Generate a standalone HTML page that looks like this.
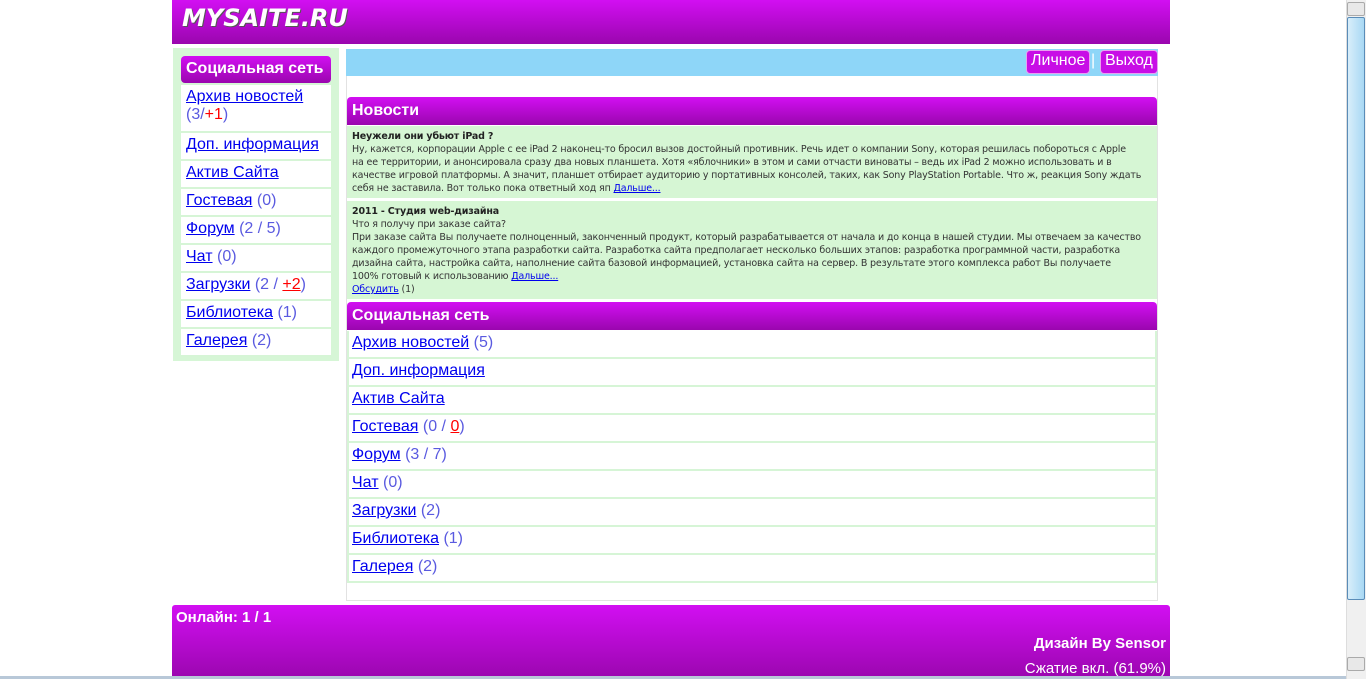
<!DOCTYPE html>
<html><head><meta charset="utf-8"><style>
*{margin:0;padding:0;box-sizing:border-box}
body{width:1366px;height:679px;overflow:hidden;background:#fff;font-family:"Liberation Sans",sans-serif;position:relative}
.abs{position:absolute}
.grad{background:linear-gradient(#d20ff2,#9a06ae)}
a{color:#0000ee;text-decoration:underline}
.cnt{color:#5a5ae0}
.red{color:#f00}
.hdr{color:#fff;font-weight:bold;font-size:16px;border-radius:4px 4px 0 0;padding-left:5px}
.item{background:#fff;border-bottom:2px solid #d6f5d6;height:28px;font-size:16px;padding:3px 0 0 5px;white-space:nowrap}
.news{background:#d6f6d4;font-size:9.5px;line-height:13px;color:#333;padding:4px 5px;white-space:nowrap;font-family:"DejaVu Sans",sans-serif;letter-spacing:-0.17px}
.news b{color:#222}
.btn{background:#c80de6;color:#fff;font-size:16px;border:1px solid #e8a0f0;border-radius:4px;height:24px;padding:1px 4px 0}
</style></head><body>
<div class="abs grad" style="left:172px;top:0;width:998px;height:44px"></div>
<div class="abs" style="left:182px;top:4px;font:bold italic 24px 'DejaVu Sans',sans-serif;color:#fff;letter-spacing:0;text-shadow:1px 1px 0 #555">MYSAITE.RU</div>

<div class="abs" style="left:173px;top:48px;width:166px;height:313px;background:#d6f6d6"></div>
<div class="abs" style="left:181px;top:56px;width:150px">
 <div class="grad hdr" style="height:27px;line-height:25px;border-radius:4px;">Социальная сеть</div>
 <div class="item" style="height:48px;margin-top:2px"><a>Архив новостей</a><br><span class="cnt">(3/<span class="red">+1</span>)</span></div>
 <div class="item"><a>Доп. информация</a></div>
 <div class="item"><a>Актив Сайта</a></div>
 <div class="item"><a>Гостевая</a> <span class="cnt">(0)</span></div>
 <div class="item"><a>Форум</a> <span class="cnt">(2 / 5)</span></div>
 <div class="item"><a>Чат</a> <span class="cnt">(0)</span></div>
 <div class="item"><a>Загрузки</a> <span class="cnt">(2 / <a class="red" style="color:#f00">+2</a>)</span></div>
 <div class="item"><a>Библиотека</a> <span class="cnt">(1)</span></div>
 <div class="item"><a>Галерея</a> <span class="cnt">(2)</span></div>
</div>

<div class="abs" style="left:346px;top:49px;width:812px;height:552px;border:1px solid #e2e2e2;background:#fff"></div>
<div class="abs" style="left:346px;top:49px;width:812px;height:27px;background:#8ed6f8"></div>
<div class="abs btn" style="left:1026px;top:50px">Личное</div>
<div class="abs" style="left:1091px;top:52px;color:#fff;font-size:16px">|</div>
<div class="abs btn" style="left:1100px;top:50px">Выход</div>

<div class="abs" style="left:347px;top:97px;width:810px">
 <div class="grad hdr" style="height:28px;line-height:27px">Новости</div>
 <div class="news" style="margin-top:1px;height:72px"><b>Неужели они убьют iPad ?</b><br>Ну, кажется, корпорации Apple с ее iPad 2 наконец-то бросил вызов достойный противник. Речь идет о компании Sony, которая решилась побороться с Apple<br>на ее территории, и анонсировала сразу два новых планшета. Хотя «яблочники» в этом и сами отчасти виноваты – ведь их iPad 2 можно использовать и в<br>качестве игровой платформы. А значит, планшет отбирает аудиторию у портативных консолей, таких, как Sony PlayStation Portable. Что ж, реакция Sony ждать<br>себя не заставила. Вот только пока ответный ход яп <a>Дальше...</a></div>
 <div class="news" style="margin-top:3px;height:98px"><b>2011 - Студия web-дизайна</b><br>Что я получу при заказе сайта?<br>При заказе сайта Вы получаете полноценный, законченный продукт, который разрабатывается от начала и до конца в нашей студии. Мы отвечаем за качество<br>каждого промежуточного этапа разработки сайта. Разработка сайта предполагает несколько больших этапов: разработка программной части, разработка<br>дизайна сайта, настройка сайта, наполнение сайта базовой информацией, установка сайта на сервер. В результате этого комплекса работ Вы получаете<br>100% готовый к использованию <a>Дальше...</a><br><a>Обсудить</a> (1)</div>
 <div class="grad hdr" style="height:28px;line-height:27px;margin-top:3px">Социальная сеть</div>
 <div style="border-left:2px solid #d6f5d6;border-right:2px solid #d6f5d6">
 <div class="item" style="margin-top:1px;padding-left:3px"><a>Архив новостей</a> <span class="cnt">(5)</span></div>
 <div class="item" style="padding-left:3px"><a>Доп. информация</a></div>
 <div class="item" style="padding-left:3px"><a>Актив Сайта</a></div>
 <div class="item" style="padding-left:3px"><a>Гостевая</a> <span class="cnt">(0 / <a style="color:#f00">0</a>)</span></div>
 <div class="item" style="padding-left:3px"><a>Форум</a> <span class="cnt">(3 / 7)</span></div>
 <div class="item" style="padding-left:3px"><a>Чат</a> <span class="cnt">(0)</span></div>
 <div class="item" style="padding-left:3px"><a>Загрузки</a> <span class="cnt">(2)</span></div>
 <div class="item" style="padding-left:3px"><a>Библиотека</a> <span class="cnt">(1)</span></div>
 <div class="item" style="padding-left:3px"><a>Галерея</a> <span class="cnt">(2)</span></div>
 </div>
</div>

<div class="abs grad" style="left:172px;top:605px;width:998px;height:74px;border-radius:3px 3px 0 0;color:#fff">
 <div class="abs" style="left:4px;top:4px;font-weight:bold;font-size:15px">Онлайн: 1 / 1</div>
 <div class="abs" style="right:4px;top:30px;font-weight:bold;font-size:15px">Дизайн By Sensor</div>
 <div class="abs" style="right:4px;top:55px;font-size:15px">Сжатие вкл. (61.9%)</div>
</div>
<div class="abs" style="left:0;top:676px;width:1366px;height:3px;background:#b8c8d8"></div>

<div class="abs" style="left:1346px;top:0;width:20px;height:679px;background:#f0f0f0;border-left:1px solid #ddd"></div>
<div class="abs" style="left:1347px;top:2px;width:18px;height:14px;background:#e8e8e8;border:1px solid #aaa;border-radius:2px"></div>
<div class="abs" style="left:1347px;top:17px;width:18px;height:583px;background:linear-gradient(90deg,#d8eefa,#a8d8f4);border:1px solid #5a8cb8;border-radius:2px"></div>
<div class="abs" style="left:1347px;top:657px;width:18px;height:14px;background:#e8e8e8;border:1px solid #aaa;border-radius:2px"></div>
</body></html>
